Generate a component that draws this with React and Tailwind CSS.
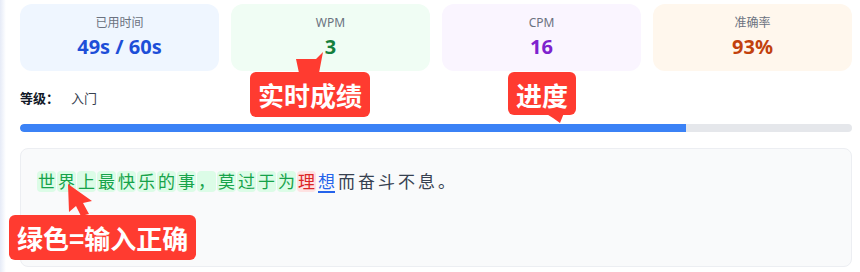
import React from 'react';

const FONT = { fontFamily: '"Noto Sans", "Noto Sans CJK SC", sans-serif' };

const stats = [
  { label: '已用时间', value: '49s / 60s', box: 'bg-[#eff6ff]', text: 'text-[#1d4ed8]' },
  { label: 'WPM', value: '3', box: 'bg-[#f0fdf4]', text: 'text-[#15803d]' },
  { label: 'CPM', value: '16', box: 'bg-[#faf5ff]', text: 'text-[#7e22ce]' },
  { label: '准确率', value: '93%', box: 'bg-[#fff7ed]', text: 'text-[#c2410c]' },
];

const sentence = '世界上最快乐的事，莫过于为理想而奋斗不息。';

function charClass(i) {
  if (i < 13) return 'bg-[#dcfce7] text-[#16a34a]';
  if (i === 13) return 'bg-[#fee2e2] text-[#dc2626]';
  if (i === 14) return 'text-[#2563eb] underline decoration-2 underline-offset-[3px]';
  return 'text-[#374151]';
}

function Callout({ className, children }) {
  return (
    <div
      className={`absolute bg-[#ff3b30] text-white font-bold text-[26px] leading-[45px] rounded-md px-2 ${className}`}
      style={{ fontFamily: '"Noto Sans CJK SC", sans-serif' }}
    >
      {children}
    </div>
  );
}

const App = () => {
  return (
    <div className="relative flex w-[860px] h-[272px] bg-white overflow-hidden" style={FONT}>
      <div className="w-[6px] bg-gradient-to-r from-[#e6ebf7] to-white" />
      <div className="flex-1 pl-[14px] pr-2 pt-1">
        <div className="grid grid-cols-4 gap-3">
          {stats.map((s) => (
            <div key={s.label} className={`h-[67px] rounded-xl flex flex-col items-center justify-center gap-0.5 ${s.box}`}>
              <div className="text-xs leading-4 text-[#6b7280]">{s.label}</div>
              <div className={`text-xl leading-7 font-bold ${s.text}`}>{s.value}</div>
            </div>
          ))}
        </div>

        <div className="mt-[17px] flex items-center text-[13px] leading-5">
          <span className="font-bold text-[#111827]">等级：</span>
          <span className="ml-[12px] text-[#374151]">入门</span>
        </div>

        <div className="mt-4 h-2 rounded-full bg-[#e5e7eb] overflow-hidden">
          <div className="h-full bg-[#3b82f6] rounded-l-full" style={{ width: '80%' }} />
        </div>

        <div className="mt-4 h-[119px] rounded-lg border border-[#eceef2] bg-[#f9fafb] px-4 pt-[22px]">
          <div className="flex flex-wrap gap-px text-[17px]">
            {sentence.split('').map((c, i) => (
              <span key={i} className={`w-[19px] h-[21px] leading-[21px] text-center rounded ${charClass(i)}`}>
                {c}
              </span>
            ))}
          </div>
        </div>
      </div>

      {/* annotation overlays */}
      <svg className="absolute inset-0 pointer-events-none" width="860" height="272">
        <polygon points="296,59 316,59 323,52 319,73 299,73" fill="#ff3b30" />
        <polygon points="545,113 564,113 560,123 553,118" fill="#ff3b30" />
        <polygon points="68,184 92,201 83,203 89,214 81,216 76,206 69,212" fill="#ff3b30" />
      </svg>
      <Callout className="left-[250px] top-[72px] h-[45px]">实时成绩</Callout>
      <Callout className="left-[508px] top-[72px] h-[43px] leading-[43px]">进度</Callout>
      <Callout className="left-[9px] top-[215px] h-[45px]">绿色=输入正确</Callout>
    </div>
  );
};

export default App;
